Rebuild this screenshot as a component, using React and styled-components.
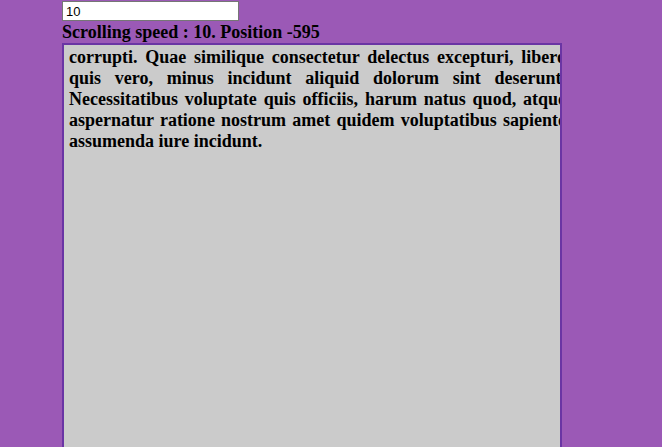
import React, { useState } from 'react';
import styled, { createGlobalStyle } from 'styled-components';

const GlobalStyle = createGlobalStyle`
    html, body {
        margin: 0;
        padding: 0;
        background: #9b59b6;
        overflow: hidden;
    }
`

const Page = styled.div`
    padding: 1px 0 0 62px;
    font-family: "Liberation Serif", "Times New Roman", serif;
`

const SpeedInput = styled.input`
    display: block;
    box-sizing: border-box;
    width: 177px;
    height: 20px;
    margin: 0;
    padding: 1px 3px;
    border: 1px solid #767676;
    background: #fff;
    font-family: "Liberation Sans", Arial, sans-serif;
    font-size: 13px;
    color: #000;
    outline: none;
`

const Status = styled.div`
    font-size: 18px;
    font-weight: bold;
    line-height: 22px;
    color: #000;
`

const Viewport = styled.div`
    box-sizing: border-box;
    width: 500px;
    height: 480px;
    border: 2px solid #6a35a4;
    background: #cbcbcb;
    overflow: hidden;
`

const Content = styled.div`
    width: 497px;
    padding: 2px 5px;
    font-size: 18px;
    font-weight: bold;
    line-height: 21px;
    color: #000;
`

const Line = styled.div`
    text-align: justify;
    text-align-last: ${props => props.$last ? 'left' : 'justify'};
    white-space: nowrap;
`

const lines = [
    "corrupti. Quae similique consectetur delectus excepturi, libero",
    "quis vero, minus incidunt aliquid dolorum sint deserunt.",
    "Necessitatibus voluptate quis officiis, harum natus quod, atque",
    "aspernatur ratione nostrum amet quidem voluptatibus sapiente",
    "assumenda iure incidunt.",
];

export default function App() {
    const [speed, setSpeed] = useState("10");

    return (
        <Page>
            <GlobalStyle />
            <SpeedInput value={speed} onChange={e => setSpeed(e.target.value)} />
            <Status>Scrolling speed : {speed}. Position -595</Status>
            <Viewport>
                <Content>
                    {lines.map((text, i) => (
                        <Line key={i} $last={i === lines.length - 1}>{text}</Line>
                    ))}
                </Content>
            </Viewport>
        </Page>
    )
}
